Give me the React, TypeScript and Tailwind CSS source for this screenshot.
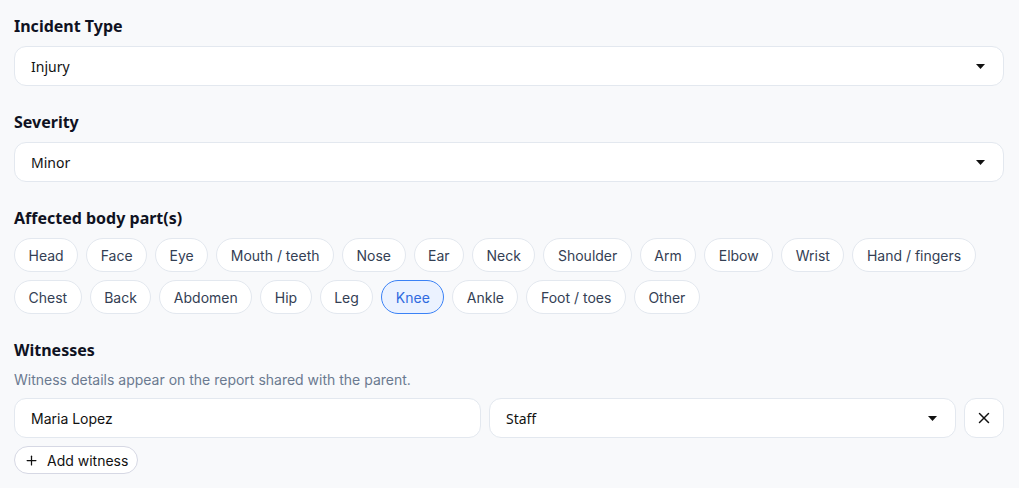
import { Plus, X } from "lucide-react";

const bodyParts = [
  "Head",
  "Face",
  "Eye",
  "Mouth / teeth",
  "Nose",
  "Ear",
  "Neck",
  "Shoulder",
  "Arm",
  "Elbow",
  "Wrist",
  "Hand / fingers",
  "Chest",
  "Back",
  "Abdomen",
  "Hip",
  "Leg",
  "Knee",
  "Ankle",
  "Foot / toes",
  "Other",
];

const Caret = () => (
  <svg width="9" height="5" viewBox="0 0 9 5" className="shrink-0">
    <path d="M0 0 H9 L4.5 5 Z" fill="#111" />
  </svg>
);

const SelectBox = ({ value }: { value: string }) => (
  <div className="h-10 w-full bg-white border border-[#e3e8ef] rounded-xl flex items-center justify-between pl-4 pr-[18px] font-['Noto_Sans',sans-serif] text-[14px] text-[#111]">
    <span>{value}</span>
    <Caret />
  </div>
);

const Heading = ({ children }: { children: string }) => (
  <h2 className="h-6 leading-6 font-['Noto_Sans',sans-serif] font-bold text-[16px] text-[#0f1222]">
    {children}
  </h2>
);

const App = () => {
  const selected = "Knee";
  return (
    <div className="bg-[#f8f9fb] min-h-[488px] pt-[14px] pl-[14px] pr-[15px] font-['Inter',sans-serif]">
      <div className="flex flex-col gap-6">
        <section className="flex flex-col gap-2">
          <Heading>Incident Type</Heading>
          <SelectBox value="Injury" />
        </section>
        <section className="flex flex-col gap-2">
          <Heading>Severity</Heading>
          <SelectBox value="Minor" />
        </section>
        <section className="flex flex-col gap-2">
          <Heading>Affected body part(s)</Heading>
          <div className="flex flex-wrap gap-2">
            {bodyParts.map((p) =>
              p === selected ? (
                <span
                  key={p}
                  className="h-[34px] px-[13.5px] flex items-center rounded-full border border-[#3b82f6] bg-[#ebf2ff] text-[#2f6ae0] text-[14px]"
                >
                  {p}
                </span>
              ) : (
                <span
                  key={p}
                  className="h-[34px] px-[13.5px] flex items-center rounded-full border border-[#e3e8ef] bg-white text-[#344054] text-[14px]"
                >
                  {p}
                </span>
              )
            )}
          </div>
        </section>
        <section className="flex flex-col">
          <Heading>Witnesses</Heading>
          <p className="mt-2 h-5 leading-5 text-[14px] text-[#6b7a90]">
            Witness details appear on the report shared with the parent.
          </p>
          <div className="mt-2 grid grid-cols-[1fr_1fr_40px] gap-2">
            <div className="h-10 bg-white border border-[#e3e8ef] rounded-xl flex items-center pl-4 text-[14px] text-[#111]">
              Maria Lopez
            </div>
            <SelectBox value="Staff" />
            <button className="w-10 h-10 bg-white border border-[#e3e8ef] rounded-xl flex items-center justify-center text-[#111]">
              <X size={18} strokeWidth={2} />
            </button>
          </div>
          <div className="mt-2">
            <button className="h-7 px-[9px] flex items-center gap-2 bg-white border border-[#d6d8e4] rounded-full text-[14px] text-[#111]">
              <Plus size={15} strokeWidth={2} />
              Add witness
            </button>
          </div>
        </section>
      </div>
    </div>
  );
};

export default App;
